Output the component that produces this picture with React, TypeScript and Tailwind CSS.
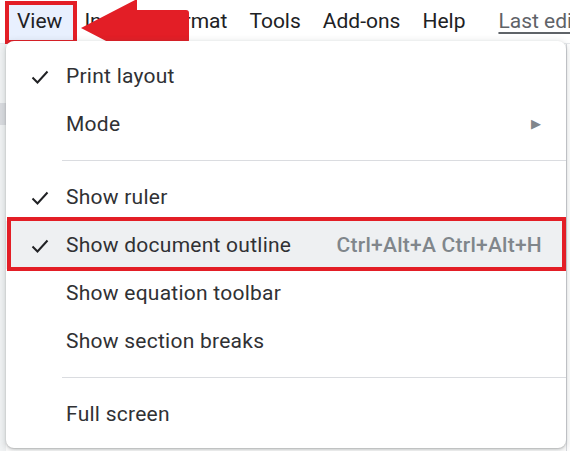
import React from 'react';

const Check: React.FC = () => (
  <svg width="20" height="20" viewBox="0 0 20 20" className="shrink-0">
    <path d="M2.5 10.5 L7.5 15.5 L17.5 4.5" fill="none" stroke="#202124" strokeWidth="2" />
  </svg>
);

type Item = { label: string; checked?: boolean; shortcut?: string; submenu?: boolean; active?: boolean };

const MenuRow: React.FC<{ item: Item }> = ({ item }) => (
  <div className={`relative h-[48px] flex items-center pl-[24px] pr-[24px] ${item.active ? 'bg-[#eef0f2]' : ''}`}>
    <div className="w-[20px] h-[20px] mt-[2px] flex items-center justify-center">{item.checked && <Check />}</div>
    <span className="ml-[16px] mt-[1px] text-[21px] tracking-[0.25px] text-[#303134] whitespace-nowrap">{item.label}</span>
    <div className="flex-1" />
    {item.shortcut && (
      <span className="mt-[1px] text-[21px] tracking-[0.25px] font-medium text-[#80868b] whitespace-nowrap">{item.shortcut}</span>
    )}
    {item.submenu && <span className="text-[13px] text-[#80868b] mr-[1px]">▶</span>}
    {item.active && (
      <div className="absolute left-[1px] right-0 top-[-4px] bottom-[-2px] border-[4px] border-[#e31e26] pointer-events-none" />
    )}
  </div>
);

const Divider: React.FC = () => <div className="my-[12px] ml-[56px] h-px bg-[#dadce0]" />;

export default function App() {
  const menus = ['View', 'Insert', 'Format', 'Tools', 'Add-ons', 'Help'];

  return (
    <div className="relative w-[570px] h-[451px] overflow-hidden bg-white font-['Roboto',sans-serif]">
      {/* menu bar */}
      <div className="h-[44px] flex items-center pl-[6px] border-b border-[#e8eaed] text-[21px] text-[#202124] whitespace-nowrap overflow-hidden">
        {menus.map((m) => (
          <div key={m} className={`px-[11px] h-[38px] flex items-center shrink-0 ${m === 'View' ? 'bg-[#e8f0fe]' : ''}`}>
            {m}
          </div>
        ))}
        <div className="ml-[22px] shrink-0 text-[#5f6368] underline underline-offset-[4px]">Last edit was seconds ago</div>
      </div>

      {/* page background */}
      <div className="flex h-[407px]">
        <div className="w-[6px] bg-[#f1f3f4] flex flex-col">
          <div className="mt-[59px] h-[22px] bg-[#dadce0]" />
        </div>
        <div className="flex-1" />
        <div className="w-[4px] border-l border-[#dadce0]" />
      </div>

      {/* View box annotation */}
      <div className="absolute left-[5px] top-[1px] w-[72px] h-[43px] border-[4px] border-[#e31e26]" />

      {/* arrow */}
      <svg className="absolute left-0 top-0" width="200" height="70" viewBox="0 0 200 70">
        <path d="M81 28 L137 -1 L137 10 L186 10 Q189 10 189 13 L189 40 Q189 43 186 43 L137 43 L137 57 Z" fill="#e31e26" />
      </svg>

      {/* dropdown */}
      <div className="absolute left-[6px] top-[41px] w-[560px] h-[407px] bg-white rounded-[8px] shadow-[0_2px_6px_2px_rgba(60,64,67,0.15),0_1px_2px_rgba(60,64,67,0.3)] pt-[11px] pb-[10px]">
        <MenuRow item={{ label: 'Print layout', checked: true }} />
        <MenuRow item={{ label: 'Mode', submenu: true }} />
        <Divider />
        <MenuRow item={{ label: 'Show ruler', checked: true }} />
        <MenuRow item={{ label: 'Show document outline', checked: true, shortcut: 'Ctrl+Alt+A Ctrl+Alt+H', active: true }} />
        <MenuRow item={{ label: 'Show equation toolbar' }} />
        <MenuRow item={{ label: 'Show section breaks' }} />
        <Divider />
        <MenuRow item={{ label: 'Full screen' }} />
      </div>
    </div>
  );
}
